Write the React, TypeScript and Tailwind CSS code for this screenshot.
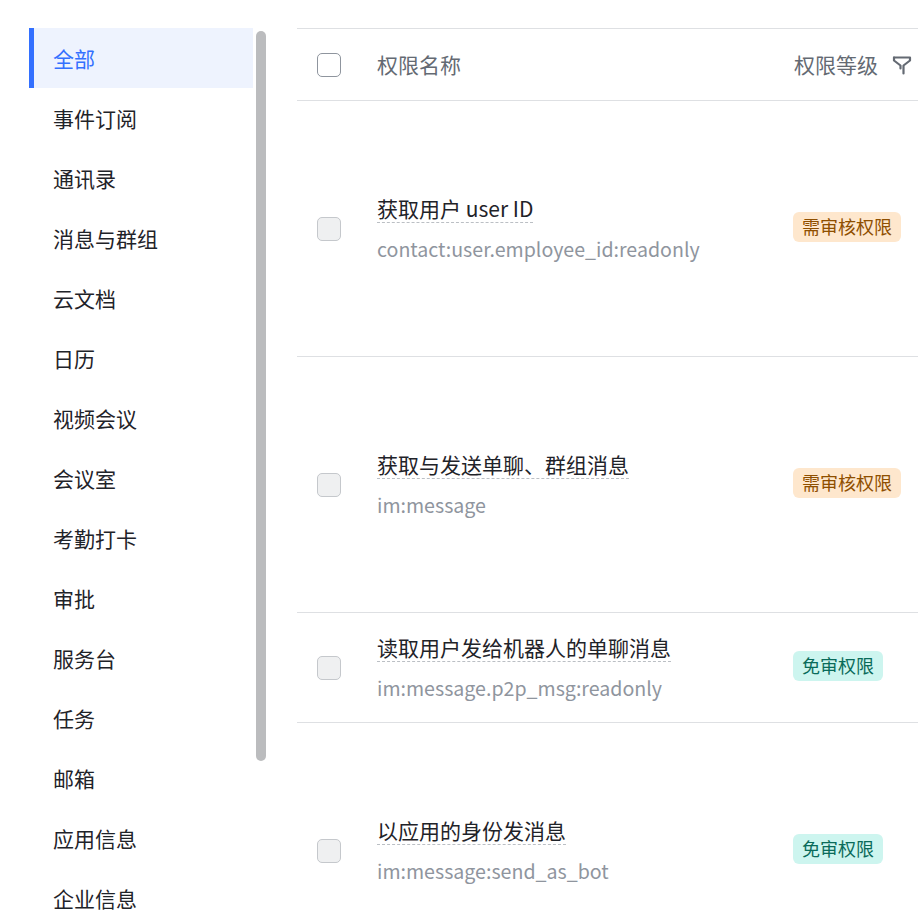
import { useState } from "react";

const categories = [
  "全部",
  "事件订阅",
  "通讯录",
  "消息与群组",
  "云文档",
  "日历",
  "视频会议",
  "会议室",
  "考勤打卡",
  "审批",
  "服务台",
  "任务",
  "邮箱",
  "应用信息",
  "企业信息",
];

type Scope = {
  name: string;
  code: string;
  level: "review" | "free";
  height: string;
};

const scopes: Scope[] = [
  { name: "获取用户 user ID", code: "contact:user.employee_id:readonly", level: "review", height: "h-[256px]" },
  { name: "获取与发送单聊、群组消息", code: "im:message", level: "review", height: "h-[256px]" },
  { name: "读取用户发给机器人的单聊消息", code: "im:message.p2p_msg:readonly", level: "free", height: "h-[110px]" },
  { name: "以应用的身份发消息", code: "im:message:send_as_bot", level: "free", height: "h-[256px]" },
];

function FilterIcon() {
  return (
    <svg width="22" height="22" viewBox="0 0 22 22" fill="none" stroke="#646a73" strokeWidth="2.2" strokeLinecap="round" strokeLinejoin="round">
      <path d="M3 3.5h16v3L12.5 11.5v8" />
      <path d="M3 3.5v3L9.5 11.5v3" />
    </svg>
  );
}

export default function App() {
  const [active, setActive] = useState(0);

  return (
    <div className="flex w-[918px] h-[918px] overflow-hidden bg-white font-['Noto_Sans_CJK_SC','Noto_Sans',sans-serif]">
      <div className="flex shrink-0 pl-[29px] pt-[28px]">
        <nav className="w-[224px]">
          {categories.map((c, i) => (
            <div
              key={c}
              onClick={() => setActive(i)}
              className={
                i === active
                  ? "flex h-[60px] items-center border-l-[5px] border-[#3370ff] bg-[#eef3fe] pl-[19px] pt-[2px] text-[21px] text-[#3370ff]"
                  : "flex h-[60px] items-center pl-[24px] pt-[2px] text-[21px] text-[#1f2329]"
              }
            >
              {c}
            </div>
          ))}
        </nav>
        <div className="ml-[3px] mt-[3px] h-[730px] w-[10px] rounded-full bg-[#bbbcbe]" />
      </div>

      <div className="ml-[31px] mt-[28px] w-[700px] shrink-0">
        <div className="flex h-[73px] items-center border-y border-[#dee0e3]">
          <div className="w-[80px] pl-[20px]">
            <div className="h-[24px] w-[24px] rounded-[5px] border border-[#8f959e] bg-white" />
          </div>
          <div className="w-[416px] text-[21px] text-[#646a73]">权限名称</div>
          <div className="flex items-center gap-[13px] pl-[1px] text-[21px] text-[#646a73]">
            <span>权限等级</span>
            <FilterIcon />
          </div>
        </div>

        {scopes.map((s) => (
          <div key={s.code} className={`flex items-center border-b border-[#dee0e3] ${s.height}`}>
            <div className="w-[80px] pl-[20px]">
              <div className="h-[24px] w-[24px] rounded-[5px] border border-[#c5c8cc] bg-[#eff0f1]" />
            </div>
            <div className="flex w-[416px] flex-col items-start">
              <span className="border-b border-dashed border-[#bbbfc4] text-[21px] leading-[28px] text-[#1f2329]">
                {s.name}
              </span>
              <span className="mt-[12px] text-[19.6px] leading-[28px] text-[#8f959e]">{s.code}</span>
            </div>
            <div className="mb-[4px]">
              {s.level === "review" ? (
                <span className="inline-flex h-[30px] items-center rounded-[6px] bg-[#fee7cd] px-[9px] text-[18px] text-[#8f4f00]">
                  需审核权限
                </span>
              ) : (
                <span className="inline-flex h-[30px] items-center rounded-[6px] bg-[#cdf5ef] px-[9px] text-[18px] text-[#0a6b5a]">
                  免审权限
                </span>
              )}
            </div>
          </div>
        ))}
      </div>
    </div>
  );
}
